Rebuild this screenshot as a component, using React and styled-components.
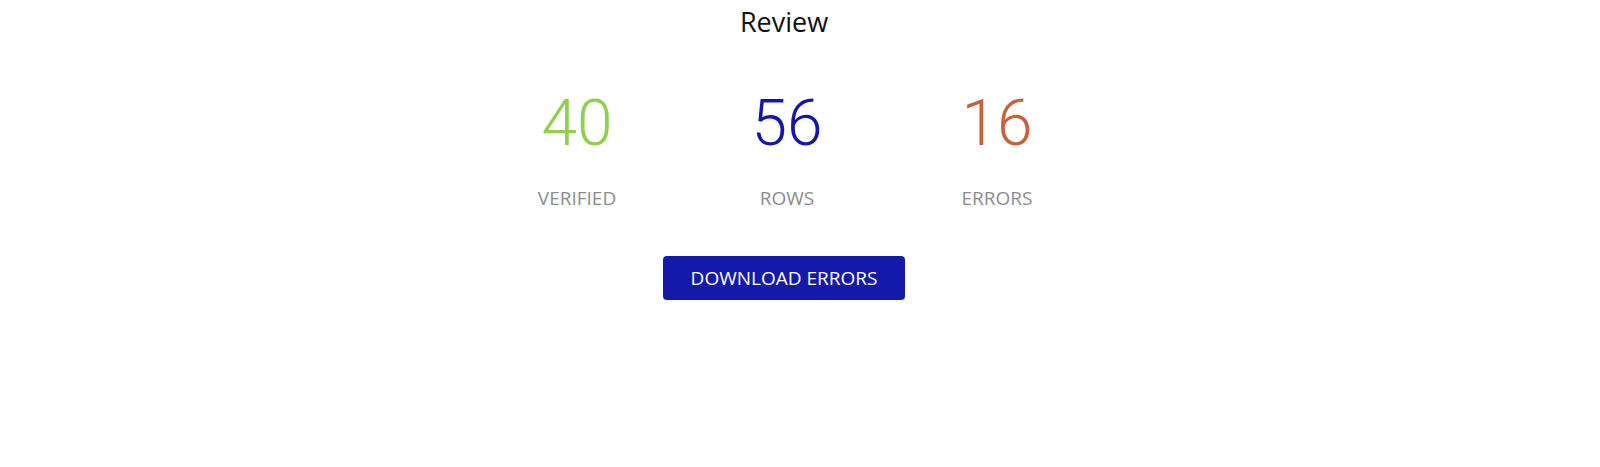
import React from "react";
import styled, { createGlobalStyle } from "styled-components";

const GlobalStyle = createGlobalStyle`
  body {
    margin: 0;
    background: #ffffff;
    font-family: "Open Sans", "Liberation Sans", sans-serif;
  }
`;

const stats = [
  { value: 40, label: "VERIFIED", color: "#8fd14f" },
  { value: 56, label: "ROWS", color: "#1515a8" },
  { value: 16, label: "ERRORS", color: "#c9603a" },
];

export default function App() {
  return (
    <>
      <GlobalStyle />
      <ReviewWrapper>
        <Heading>Review</Heading>
        <StatsRow>
          {stats.map((s) => (
            <Stat key={s.label}>
              <StatValue color={s.color}>{s.value}</StatValue>
              <StatLabel>{s.label}</StatLabel>
            </Stat>
          ))}
        </StatsRow>
        <DownloadBtn>DOWNLOAD ERRORS</DownloadBtn>
      </ReviewWrapper>
    </>
  );
}

const ReviewWrapper = styled.div`
  width: 1568px;
  height: 467px;
  display: flex;
  flex-direction: column;
  align-items: center;
`;
const Heading = styled.h2`
  margin: 6px 0 0;
  font-size: 27px;
  font-weight: 400;
  color: #111111;
  line-height: 32px;
`;
const StatsRow = styled.div`
  display: grid;
  grid-template-columns: repeat(3, 210px);
  margin-top: 48px;
  margin-left: 6px;
`;
const Stat = styled.div`
  display: flex;
  flex-direction: column;
  align-items: center;
`;
const StatValue = styled.div`
  font-family: Roboto, "Liberation Sans", sans-serif;
  font-size: 64px;
  font-weight: 300;
  line-height: 76px;
  color: ${(p) => p.color};
`;
const StatLabel = styled.div`
  margin-top: 24px;
  font-size: 19px;
  color: #8c8c8c;
  line-height: 24px;
`;
const DownloadBtn = styled.button`
  margin-top: 46px;
  width: 242px;
  height: 44px;
  border: none;
  border-radius: 4px;
  background: #1419aa;
  color: #ffffff;
  font-family: "Open Sans", "Liberation Sans", sans-serif;
  font-size: 19px;
  font-weight: 500;
  cursor: pointer;
`;
